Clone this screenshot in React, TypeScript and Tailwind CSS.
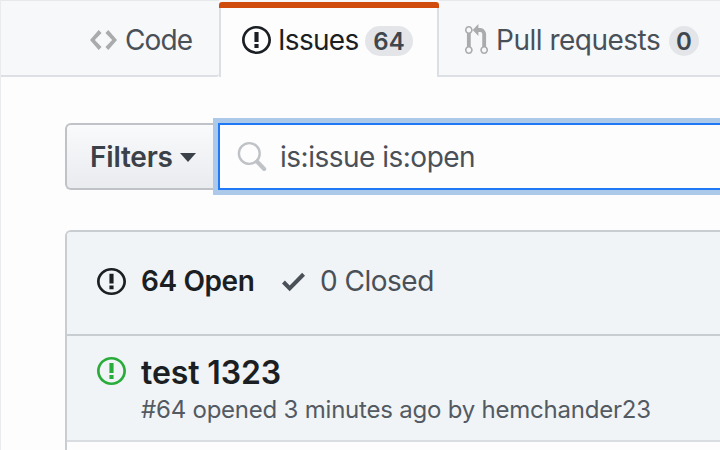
import React from "react";

const ISSUE =
  "M7 2.3c3.14 0 5.7 2.56 5.7 5.7s-2.56 5.7-5.7 5.7A5.71 5.71 0 0 1 1.3 8c0-3.14 2.56-5.7 5.7-5.7zM7 1C3.14 1 0 4.14 0 8s3.14 7 7 7 7-3.14 7-7-3.14-7-7-7zm1 3H6v5h2V4zm0 6H6v2h2v-2z";
const CODE =
  "M9.5 3L8 4.5 11.5 8 8 11.5 9.5 13 14 8 9.5 3zm-5 0L0 8l4.5 5L6 11.5 2.5 8 6 4.5 4.5 3z";
const PULL =
  "M11 11.28V5c-.03-.78-.34-1.47-.94-2.06C9.46 2.35 8.78 2.03 8 2H7V0L4 3l3 3V4h1c.27.02.48.11.69.31.21.2.3.42.31.69v6.28A1.993 1.993 0 0 0 10 15a1.993 1.993 0 0 0 1-3.72zm-1 2.92c-.66 0-1.2-.55-1.2-1.2 0-.65.55-1.2 1.2-1.2.65 0 1.2.55 1.2 1.2 0 .65-.55 1.2-1.2 1.2zM4 3c0-1.11-.89-2-2-2a1.993 1.993 0 0 0-1 3.72v6.56A1.993 1.993 0 0 0 2 15a1.993 1.993 0 0 0 1-3.72V4.72c.59-.34 1-.98 1-1.72zm-.8 10c0 .66-.55 1.2-1.2 1.2-.65 0-1.2-.55-1.2-1.2 0-.65.55-1.2 1.2-1.2.65 0 1.2.55 1.2 1.2zM2 4.2C1.34 4.2.8 3.65.8 3c0-.65.55-1.2 1.2-1.2.65 0 1.2.55 1.2 1.2 0 .65-.55 1.2-1.2 1.2z";
const CHECK = "M12 5l-8 8-4-4 1.5-1.5L4 10l6.5-6.5L12 5z";

function Icon({ d, box, className }: { d: string; box: string; className: string }) {
  return (
    <svg viewBox={box} preserveAspectRatio="none" fill="currentColor" className={`shrink-0 ${className}`}>
      <path fillRule="evenodd" d={d} />
    </svg>
  );
}

function Tabs() {
  return (
    <nav className="flex h-[77px] text-[28px] leading-[34px]">
      <div className="flex w-[219px] shrink-0 items-start rounded-br-[3px] border-t border-b-2 border-t-[#e6e9ec] border-b-[#dcdfe4] bg-[#f6f8fa] pt-[22px] pl-[90px] text-[#4a5058]">
        <Icon d={CODE} box="0 0 14 16" className="mt-px h-8 w-[27px] text-[#a9abad]" />
        <span className="ml-[8px] tracking-[-0.9px]">Code</span>
      </div>
      <div className="flex w-[220px] shrink-0 flex-col bg-[#f6f8fa] pt-[2px]">
        <div className="h-[6px] shrink-0 rounded-t-[3px] bg-[#d04c0c]" />
        <div className="flex grow items-start border-x-2 border-[#dcdfe4] bg-[#fdfdfd] pt-[15px] pl-[21px] text-[#1b1f23]">
          <Icon d={ISSUE} box="0 0 14 16" className="mt-px h-8 w-[29px]" />
          <span className="ml-[7px] w-[87px] shrink-0 tracking-[-0.7px]">Issues</span>
          <span className="mt-[3px] h-[30px] w-[48px] shrink-0 rounded-full bg-[#e3e5e8] text-center text-[24px] leading-[31px] font-semibold text-[#40464d]">
            64
          </span>
        </div>
      </div>
      <div className="flex grow items-start border-t border-b-2 border-t-[#e6e9ec] border-b-[#dcdfe4] bg-[#f6f8fa] pt-[22px] pl-[26px] text-[#4a5058]">
        <Icon d={PULL} box="0 0 12 16" className="mt-px h-8 w-[23px] text-[#a9abad]" />
        <span className="ml-[8px] w-[173px] shrink-0 whitespace-nowrap tracking-[-0.5px]">Pull requests</span>
        <span className="mt-[3px] size-[30px] shrink-0 rounded-full bg-[#e3e5e8] text-center text-[24px] leading-[31px] font-semibold text-[#40464d]">
          0
        </span>
      </div>
    </nav>
  );
}

function SearchBar() {
  return (
    <div className="mt-[46px] ml-[65px] flex h-[67px] text-[28px] leading-[34px]">
      <button className="flex w-[153px] shrink-0 items-center rounded-l-[6px] border-2 border-r-0 border-[#bfc3c8] bg-linear-to-b from-[#f9fafb] to-[#e9ebef] pl-[23px] font-semibold text-[#3b4148]">
        <span className="w-[90px] text-left tracking-[-0.2px]">Filters</span>
        <span className="mt-[2px] h-0 w-0 border-x-[8.5px] border-t-[9px] border-x-transparent" />
      </button>
      <div className="flex grow items-center border-[2.5px] border-r-0 border-[#1f78f5] bg-[#fdfdfd] pl-[17px] text-[#4a5058] shadow-[0_0_0_5px_#adc9ea]">
        <svg viewBox="0 0 30 32" className="h-8 w-[30px] shrink-0" fill="none" stroke="#bfc2c6">
          <circle cx="12.3" cy="12.5" r="10.4" strokeWidth="2.4" />
          <path d="M20 20.5L27.2 28" strokeWidth="4" strokeLinecap="round" />
        </svg>
        <span className="ml-[13px] whitespace-nowrap tracking-[-0.5px]">is:issue is:open</span>
      </div>
    </div>
  );
}

function IssueList() {
  return (
    <section className="mt-[40px] ml-[65px] h-[220px] overflow-hidden rounded-tl-[6px] border-t-2 border-l-2 border-[#c8cdd2] bg-[#fdfdfd]">
      <header className="flex h-[104px] items-start border-b-2 border-[#c8cdd2] bg-[#f0f4f7] pt-[32px] pl-[30px] text-[28px] leading-[34px]">
        <Icon d={ISSUE} box="0 0 14 16" className="mt-[2px] h-[31px] w-[29px] text-[#1b1f23]" />
        <span className="ml-[15px] w-[141px] shrink-0 font-semibold tracking-[-0.4px] whitespace-nowrap text-[#1b1f23]">64 Open</span>
        <Icon d={CHECK} box="0 0 12 16" className="mt-[2px] h-[31px] w-[23px] text-[#4a5058]" />
        <span className="ml-[15px] tracking-[-0.5px] whitespace-nowrap text-[#4a5058]">0 Closed</span>
      </header>
      <article className="flex h-[106px] items-start border-b-2 border-[#d9dde1] bg-[#f0f4f7] pl-[30px]">
        <Icon d={ISSUE} box="0 0 14 16" className="mt-[19px] h-8 w-[29px] text-[#2aac3b]" />
        <div className="ml-[15px] pt-[17px] whitespace-nowrap">
          <h2 className="text-[32px] leading-[40px] font-semibold tracking-[-0.1px] text-[#1b1f23]">test 1323</h2>
          <p className="mt-px text-[24px] leading-[32px] tracking-[-0.22px] text-[#535a62]">#64 opened 3 minutes ago by hemchander23</p>
        </div>
      </article>
    </section>
  );
}

export default function App() {
  return (
    <div className="h-[450px] w-[720px] overflow-hidden border-l border-[#e9ebed] bg-[#fdfdfd] font-['Inter',sans-serif]">
      <div className="-ml-px">
        <Tabs />
        <SearchBar />
        <IssueList />
      </div>
    </div>
  );
}
